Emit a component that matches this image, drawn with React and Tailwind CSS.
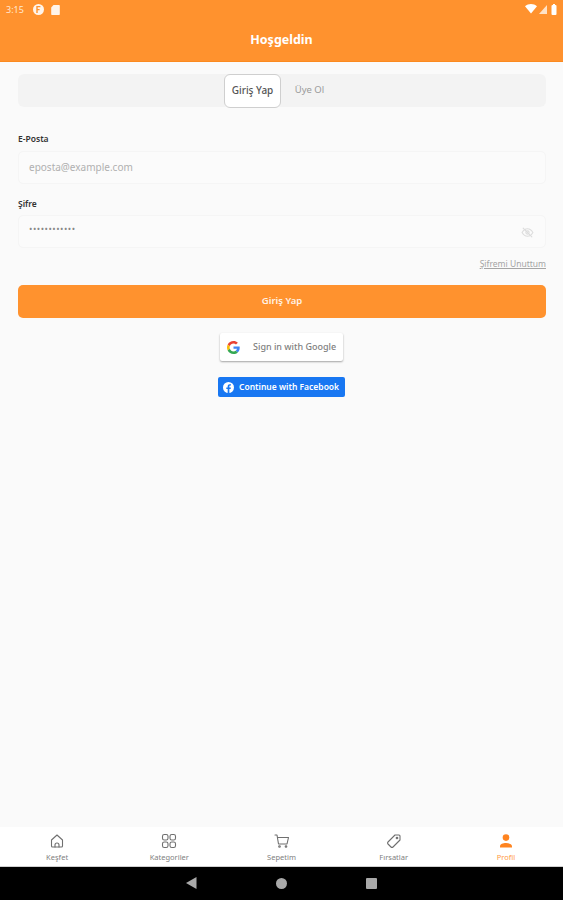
import React from "react";

const font = { fontFamily: '"Noto Sans", sans-serif' };

function Tab({ label, icon, active }) {
  return (
    <div className={`flex-1 flex flex-col items-center ${active ? "text-[#ff9a45]" : "text-[#808080]"}`}>
      <div className={`h-[20px] flex items-center justify-center ${active ? "text-[#ff8420]" : "text-[#6f6f6f]"}`}>{icon}</div>
      <div className="mt-[1px] text-[7.5px] leading-[10px]">{label}</div>
    </div>
  );
}

const s = { fill: "none", stroke: "currentColor", strokeWidth: 1.1, strokeLinecap: "round", strokeLinejoin: "round" };

export default function App() {
  return (
    <div className="w-[563px] h-[900px] flex flex-col bg-[#fafafa] overflow-hidden" style={font}>
      <header className="h-[62px] shrink-0 bg-[#ff922e] border-b border-[#fb8a20] flex flex-col text-white">
        <div className="h-[18px] px-[6px] flex items-center justify-between">
          <div className="flex items-center">
            <span className="text-[9px] leading-none text-[#ffe9d4] w-[21px]">3:15</span>
            <svg width="13" height="13" viewBox="0 0 13 13" className="ml-[5px]">
              <circle cx="6.5" cy="6.5" r="5.5" fill="#fff4ea" />
              <path d="M5 10V3.6h3.4M5 6.6h2.6" stroke="#ff922e" strokeWidth="1.4" fill="none" />
            </svg>
            <svg width="9" height="11" viewBox="0 0 9 11" className="ml-[6px]">
              <path d="M2.5 1H8a.8.8 0 0 1 .8.8v8.4a.8.8 0 0 1-.8.8H1a.8.8 0 0 1-.8-.8V3.4z" fill="#fff4ea" />
            </svg>
          </div>
          <div className="flex items-center gap-[2px]">
            <svg width="12" height="10" viewBox="0 0 12 10"><path d="M0 2.2C3.4-.6 8.6-.6 12 2.2L6 9.6z" fill="#fff" /></svg>
            <svg width="8" height="9" viewBox="0 0 8 9"><path d="M8 0v9H0z" fill="#ffe2c6" /></svg>
            <svg width="6" height="11" viewBox="0 0 6 11" className="ml-[2px]"><rect x="0.5" y="1" width="5" height="10" rx="1" fill="#fff" /><rect x="2" y="0" width="2" height="1.5" fill="#fff" /></svg>
          </div>
        </div>
        <div className="flex-1 flex items-center justify-center pt-[1px] text-[12.5px] font-bold leading-none">Hoşgeldin</div>
      </header>

      <main className="flex-1 pl-[18px] pr-[17px] pt-[12px]">
        <div className="h-[33px] rounded-[6px] bg-[#f3f3f3] flex justify-center items-center">
          <div className="flex items-center w-[114px] -ml-[2px]">
            <div className="w-[57px] h-[34px] shrink-0 rounded-[6px] bg-white border border-[#cfcfcf] flex items-center justify-center text-[10px] font-medium text-[#555]">Giriş Yap</div>
            <div className="flex-1 text-center text-[9.5px] text-[#9a9a9a]">Üye Ol</div>
          </div>
        </div>

        <div className="mt-[26px] text-[8.5px] leading-[12px] font-semibold text-[#333]">E-Posta</div>
        <div className="mt-[6px] h-[33px] rounded-[5px] bg-[#fbfbfb] border border-[#f5f5f5] flex items-center px-[10px] text-[10px] text-[#b0b0b0]">eposta@example.com</div>

        <div className="mt-[14px] text-[8.5px] leading-[12px] font-semibold text-[#333]">Şifre</div>
        <div className="mt-[5px] h-[33px] rounded-[5px] bg-[#fbfbfb] border border-[#f5f5f5] flex items-center justify-between pl-[10px] pr-[11px]">
          <span className="text-[9px] leading-none tracking-[0.5px] text-[#888] -mt-[6px]">••••••••••••</span>
          <svg width="13" height="13" viewBox="0 0 24 24" className="text-[#dcdcdc] mt-[2px]" fill="none" stroke="currentColor" strokeWidth="2" strokeLinecap="round" strokeLinejoin="round">
            <path d="M2 12s4-7 10-7 10 7 10 7-4 7-10 7-10-7-10-7z" />
            <circle cx="12" cy="12" r="3" />
            <path d="M4 4l16 16" />
          </svg>
        </div>

        <div className="mt-[10px] text-right text-[8.5px] leading-[12px] text-[#a5a5a5] underline">Şifremi Unuttum</div>

        <div className="mt-[15px] h-[33px] rounded-[5px] bg-[#ff922e] flex items-center justify-center text-[9.5px] font-semibold text-[#fff3e6]">Giriş Yap</div>

        <div className="mt-[15px] flex justify-center pr-[1px]">
          <div className="w-[123px] h-[28px] rounded-[2px] bg-white shadow-[0_1px_2px_rgba(0,0,0,0.35)] flex items-center pl-[7px]">
            <svg width="13" height="13" viewBox="0 0 48 48">
              <path fill="#EA4335" d="M24 9.5c3.5 0 6.7 1.2 9.2 3.6l6.9-6.9C35.9 2.4 30.5 0 24 0 14.6 0 6.5 5.4 2.6 13.2l8 6.2C12.4 13.7 17.7 9.5 24 9.5z" />
              <path fill="#4285F4" d="M46.9 24.5c0-1.6-.1-3.1-.4-4.5H24v9h12.9c-.6 3-2.2 5.5-4.8 7.2l7.7 6c4.5-4.2 7.1-10.3 7.1-17.7z" />
              <path fill="#FBBC05" d="M10.5 28.6c-.5-1.4-.8-3-.8-4.6s.3-3.2.8-4.6l-8-6.2C.9 16.5 0 20.1 0 24s.9 7.5 2.6 10.8l7.9-6.2z" />
              <path fill="#34A853" d="M24 48c6.5 0 11.9-2.1 15.9-5.8l-7.7-6c-2.1 1.4-4.9 2.3-8.2 2.3-6.3 0-11.6-4.2-13.5-9.9l-8 6.2C6.5 42.6 14.6 48 24 48z" />
            </svg>
            <span className="ml-[13px] text-[9px] font-medium text-[#808080] whitespace-nowrap">Sign in with Google</span>
          </div>
        </div>

        <div className="mt-[16px] flex justify-center pr-[1px]">
          <div className="w-[127px] h-[20px] rounded-[2px] bg-[#1877f2] flex items-center pl-[5px]">
            <svg width="11" height="11" viewBox="0 0 24 24">
              <circle cx="12" cy="12" r="12" fill="#fff" />
              <path d="M16.7 15.5l.5-3.5h-3.3V9.8c0-1 .5-1.9 2-1.9h1.5v-3s-1.4-.2-2.7-.2c-2.7 0-4.5 1.7-4.5 4.6V12h-3v3.5h3V24h3.7v-8.5z" fill="#1877f2" />
            </svg>
            <span className="ml-[5px] text-[8.5px] font-semibold text-white whitespace-nowrap">Continue with Facebook</span>
          </div>
        </div>
      </main>

      <nav className="h-[40px] shrink-0 bg-white border-b border-[#d0d0d0] flex pt-[4px] px-[1px]">
        <Tab label="Keşfet" icon={
          <svg width="16" height="16" viewBox="0 0 16 16" {...s}><path d="M2.5 7L8 2l5.5 5v6a1 1 0 0 1-1 1h-9a1 1 0 0 1-1-1z" /><path d="M6 14v-2a2 2 0 0 1 4 0v2" /></svg>
        } />
        <Tab label="Kategoriler" icon={
          <svg width="16" height="16" viewBox="0 0 16 16" {...s}><rect x="1.5" y="1.5" width="5.5" height="5.5" rx="1.8" /><rect x="9" y="1.5" width="5.5" height="5.5" rx="1.8" /><rect x="1.5" y="9" width="5.5" height="5.5" rx="1.8" /><rect x="9" y="9" width="5.5" height="5.5" rx="1.8" /></svg>
        } />
        <Tab label="Sepetim" icon={
          <svg width="16" height="16" viewBox="0 0 16 16" {...s}><path d="M1 2h2l1.5 9h8.5l1.5-6.5H3.5" /><circle cx="5.5" cy="13.5" r="0.8" /><circle cx="12" cy="13.5" r="0.8" /></svg>
        } />
        <Tab label="Fırsatlar" icon={
          <svg width="16" height="16" viewBox="0 0 16 16" {...s}><path d="M9 2h4a1 1 0 0 1 1 1v4l-7 7a1.4 1.4 0 0 1-2 0l-3-3a1.4 1.4 0 0 1 0-2z" /><circle cx="11" cy="5" r="0.8" /></svg>
        } />
        <Tab active label="Profil" icon={
          <svg width="16" height="16" viewBox="0 0 16 16" fill="currentColor"><circle cx="8" cy="4.6" r="3.3" /><path d="M2 14.5v-1.2C2 11 5 10 8 10s6 1 6 3.3v1.2z" /></svg>
        } />
      </nav>

      <div className="h-[33px] shrink-0 bg-black flex items-center justify-center gap-[79px] pb-[1px]">
        <svg width="11" height="12" viewBox="0 0 11 12"><path d="M10.5 0v12L0 6z" fill="#a9a9a9" /></svg>
        <div className="w-[11px] h-[11px] rounded-full bg-[#a9a9a9]" />
        <div className="w-[11px] h-[11px] rounded-[1px] bg-[#a9a9a9]" />
      </div>
    </div>
  );
}
